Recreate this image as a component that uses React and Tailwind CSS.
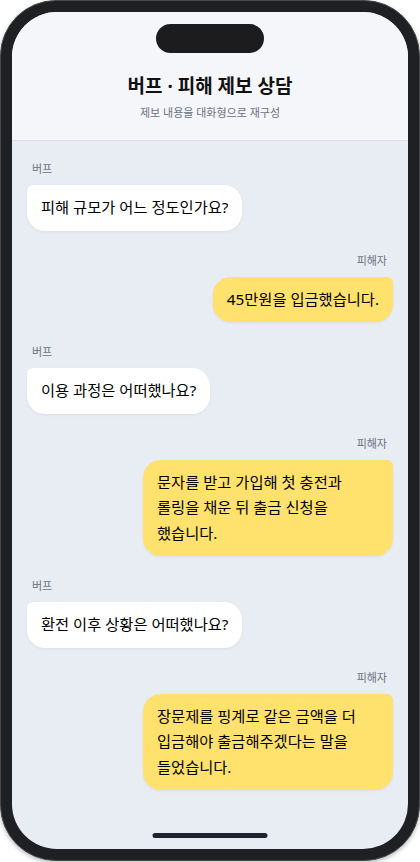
import React from 'react';

const messages = [
    { role: 'bot', content: '피해 규모가 어느 정도인가요?' },
    { role: 'user', content: '45만원을 입금했습니다.' },
    { role: 'bot', content: '이용 과정은 어떠했나요?' },
    { role: 'user', content: '문자를 받고 가입해 첫 충전과 롤링을 채운 뒤 출금 신청을 했습니다.' },
    { role: 'bot', content: '환전 이후 상황은 어떠했나요?' },
    { role: 'user', content: '장문제를 핑계로 같은 금액을 더 입금해야 출금해주겠다는 말을 들었습니다.' },
];

export default function App() {
    return (
        <div className="w-[420px] h-[862px] bg-white" style={{ fontFamily: '"Noto Sans", "Noto Sans CJK KR", sans-serif' }}>
            <div className="h-[861px] rounded-[56px] bg-[#1f2023] p-[11px] border border-[#4a4b4f] shadow-[0_2px_4px_rgba(0,0,0,0.25)]">
                <div className="relative h-full rounded-[45px] overflow-hidden flex flex-col bg-[#e8edf4]">
                    <div className="flex-shrink-0 flex flex-col items-center bg-[#f5f6fa] border-b border-[#dde2ea] pt-[12px] pb-[19px]">
                        <div className="w-[108px] h-[29px] rounded-full bg-[#1c1c1e]" />
                        <h1 className="mt-5 text-[19px] leading-[26px] font-bold text-[#111]">버프 · 피해 제보 상담</h1>
                        <p className="mt-[6px] text-[11px] leading-[16px] text-[#6b7280]">제보 내용을 대화형으로 재구성</p>
                    </div>

                    <div className="flex-1 flex flex-col gap-[22px] px-[15px] pt-[20px]">
                        {messages.map((msg, i) => <Message key={i} message={msg} />)}
                    </div>

                    <div className="absolute bottom-[11px] left-1/2 -translate-x-1/2 w-[115px] h-[5px] rounded-full bg-[#1f2330]" />
                </div>
            </div>
        </div>
    );
}

function Message({ message }) {
    const isUser = message.role === 'user';
    return (
        <div className={`flex flex-col ${isUser ? 'items-end' : 'items-start'}`}>
            <div className={`mb-2 text-[11px] leading-[16px] text-[#6b7280] ${isUser ? 'mr-[6px]' : 'ml-[5px]'}`}>
                {isUser ? '피해자' : '버프'}
            </div>
            <div className={`max-w-[250px] px-[14px] py-[10px] text-[15.3px] leading-[25.5px] text-black break-keep shadow-[0_1px_3px_rgba(0,0,0,0.06)] ${
                isUser ? 'bg-[#ffe16d] rounded-[18px] rounded-tr-[6px]' : 'bg-white rounded-[18px] rounded-tl-[6px]'
            }`}>
                {message.content}
            </div>
        </div>
    );
}
